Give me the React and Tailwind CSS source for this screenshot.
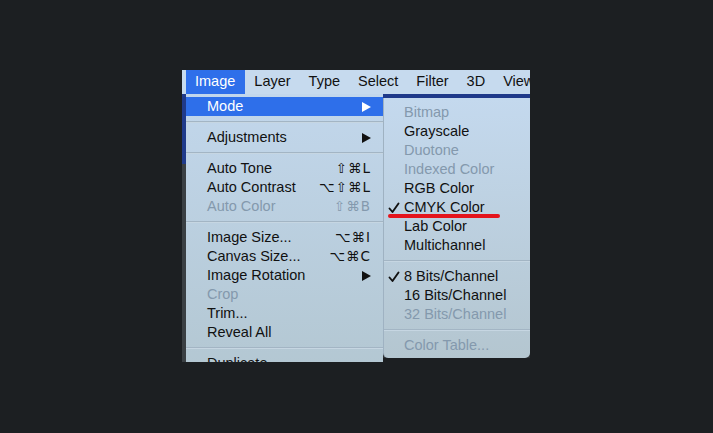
const MAIN = [
  { label: 'Mode', arrow: true, active: true },
  'sep',
  { label: 'Adjustments', arrow: true },
  'sep',
  { label: 'Auto Tone', key: '⇧⌘L' },
  { label: 'Auto Contrast', key: '⌥⇧⌘L' },
  { label: 'Auto Color', key: '⇧⌘B', disabled: true },
  'sep',
  { label: 'Image Size...', key: '⌥⌘I' },
  { label: 'Canvas Size...', key: '⌥⌘C' },
  { label: 'Image Rotation', arrow: true },
  { label: 'Crop', disabled: true },
  { label: 'Trim...' },
  { label: 'Reveal All' },
  'sep',
  { label: 'Duplicate...' },
]

const MODES = [
  { label: 'Bitmap', disabled: true },
  { label: 'Grayscale' },
  { label: 'Duotone', disabled: true },
  { label: 'Indexed Color', disabled: true },
  { label: 'RGB Color' },
  { label: 'CMYK Color', checked: true, mark: true },
  { label: 'Lab Color' },
  { label: 'Multichannel' },
  'sep',
  { label: '8 Bits/Channel', checked: true },
  { label: '16 Bits/Channel' },
  { label: '32 Bits/Channel', disabled: true },
  'sep',
  { label: 'Color Table...', disabled: true },
]

const BAR = ['Image', 'Layer', 'Type', 'Select', 'Filter', '3D', 'View']

function Sep() {
  return (
    <div className="h-[12px] flex flex-col justify-center">
      <div className="h-px bg-[#a3b5c4]" />
      <div className="h-px bg-[#c6d6e2]" />
    </div>
  )
}

function Arrow({ white }) {
  return (
    <svg width="9" height="10" viewBox="0 0 9 10" className="mr-[12px]">
      <path d="M0 0 L9 5 L0 10 Z" fill={white ? '#fff' : '#111'} />
    </svg>
  )
}

function Check() {
  return (
    <svg width="12" height="12" viewBox="0 0 12 12" className="ml-[4px]">
      <path d="M1.5 6.5 L4.5 10 L10.5 1.5" fill="none" stroke="#111" strokeWidth="1.9" strokeLinecap="round" strokeLinejoin="round" />
    </svg>
  )
}

function MainRow({ item }) {
  if (item === 'sep') return <Sep />
  const color = item.active ? 'text-white' : item.disabled ? 'text-[#8499ad]' : 'text-[#111]'
  return (
    <div
      className={`h-[19px] flex items-center justify-between pl-[21px] ${color} ${item.active ? 'bg-[#2e6fea]' : ''}`}
    >
      <span>{item.label}</span>
      {item.arrow && <Arrow white={item.active} />}
      {item.key && (
        <span className="mr-[12px] tracking-[1px]" style={{ fontFamily: '"DejaVu Sans", sans-serif', fontSize: 13.5 }}>
          {item.key}
        </span>
      )}
    </div>
  )
}

function ModeRow({ item }) {
  if (item === 'sep') return <Sep />
  const color = item.disabled ? 'text-[#8499ad]' : 'text-[#111]'
  return (
    <div className={`h-[19px] flex items-center relative ${color}`}>
      <span className="w-[20px] flex items-center">{item.checked && <Check />}</span>
      <span>{item.label}</span>
      {item.mark && (
        <div className="absolute left-[4px] top-[16px] w-[112px] h-[4px] rounded-full bg-[#e4141c]" />
      )}
    </div>
  )
}

export default function App() {
  return (
    <div
      className="w-[713px] h-[433px] bg-[#1c1f22] pt-[70px] pl-[182px] text-[14.5px]"
      style={{ fontFamily: '"Liberation Sans", Arial, sans-serif' }}
    >
      <div className="w-[348px] h-[292px] overflow-hidden flex flex-col bg-[#2d3134]">
        <div className="h-[24px] flex items-center bg-[#c6daee] text-[#111] shrink-0">
          {BAR.map((b, i) => (
            <div
              key={b}
              className={`h-full flex items-center ${i === 0 ? 'ml-[4px] pl-[9px] pr-[10px] bg-[#2e6fea] text-white' : 'px-[9px]'}`}
            >
              {b}
            </div>
          ))}
        </div>
        <div className="flex flex-1">
          <div className="w-[4px] flex flex-col">
            <div className="h-[70px] bg-[#1f3a8a]" />
            <div className="flex-1 bg-[#3a3f43]" />
          </div>
          <div className="w-[197px] bg-gradient-to-b from-[#c2d7ec] to-[#b3c7d2] pt-[3px]">
            {MAIN.map((m, i) => (
              <MainRow key={i} item={m} />
            ))}
          </div>
          <div className="flex-1 flex flex-col">
            <div className="h-[4px] bg-[#1f3a8a]" />
            <div className="h-[260px] rounded-b-[5px] bg-gradient-to-b from-[#c4d9ee] to-[#b4c6d0] pt-[5px] border-l border-[#9fb2c2]">
              {MODES.map((m, i) => (
                <ModeRow key={i} item={m} />
              ))}
            </div>
            <div className="flex-1 bg-[#1c1f22]" />
          </div>
        </div>
      </div>
    </div>
  )
}
